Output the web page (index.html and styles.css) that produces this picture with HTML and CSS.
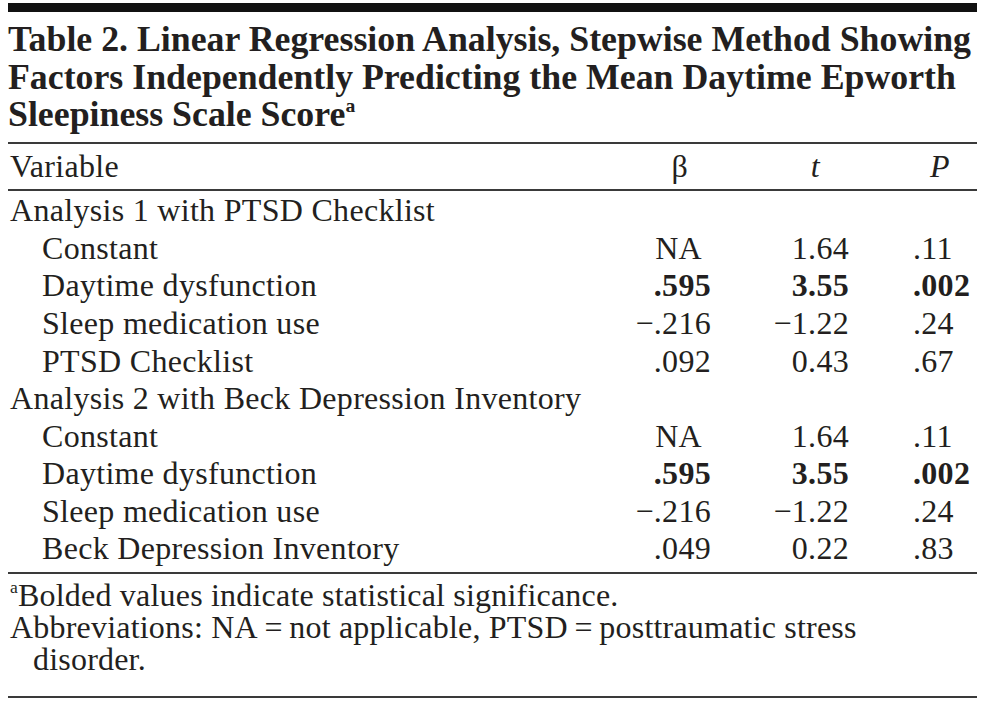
FILE: index.html
```html
<!DOCTYPE html>
<html lang="en">
<head>
<meta charset="utf-8">
<title>Table 2</title>
<link rel="stylesheet" href="styles.css">
</head>
<body>
<div class="page">
  <div class="topbar"></div>
  <h1 class="title">Table 2. Linear Regression Analysis, Stepwise Method Showing<br>Factors Independently Predicting the Mean Daytime Epworth<br>Sleepiness Scale Score<sup class="sup">a</sup></h1>
  <div class="table">
    <div class="row head">
      <span class="label">Variable</span>
      <span class="c2 hb">β</span>
      <span class="c3 ht"><i>t</i></span>
      <span class="c4 hp"><i>P</i></span>
    </div>
    <div class="tbody">
      <div class="row"><span class="label">Analysis 1 with PTSD Checklist</span><span class="c2"></span><span class="c3"></span><span class="c4"></span></div>
      <div class="row"><span class="label sub">Constant</span><span class="c2 na">NA</span><span class="c3">1.64</span><span class="c4">.11</span></div>
      <div class="row"><span class="label sub">Daytime dysfunction</span><span class="c2 b">.595</span><span class="c3 b">3.55</span><span class="c4 b">.002</span></div>
      <div class="row"><span class="label sub">Sleep medication use</span><span class="c2">−.216</span><span class="c3">−1.22</span><span class="c4">.24</span></div>
      <div class="row"><span class="label sub">PTSD Checklist</span><span class="c2">.092</span><span class="c3">0.43</span><span class="c4">.67</span></div>
      <div class="row"><span class="label">Analysis 2 with Beck Depression Inventory</span><span class="c2"></span><span class="c3"></span><span class="c4"></span></div>
      <div class="row"><span class="label sub">Constant</span><span class="c2 na">NA</span><span class="c3">1.64</span><span class="c4">.11</span></div>
      <div class="row"><span class="label sub">Daytime dysfunction</span><span class="c2 b">.595</span><span class="c3 b">3.55</span><span class="c4 b">.002</span></div>
      <div class="row"><span class="label sub">Sleep medication use</span><span class="c2">−.216</span><span class="c3">−1.22</span><span class="c4">.24</span></div>
      <div class="row"><span class="label sub">Beck Depression Inventory</span><span class="c2">.049</span><span class="c3">0.22</span><span class="c4">.83</span></div>
    </div>
  </div>
  <div class="notes">
    <p class="note"><sup class="fsup">a</sup>Bolded values indicate statistical significance.</p>
    <p class="note">Abbreviations: NA&thinsp;=&thinsp;not applicable, PTSD&thinsp;=&thinsp;posttraumatic stress disorder.</p>
  </div>
</div>
</body>
</html>
```

FILE: styles.css
```css
html, body {
  margin: 0;
  padding: 0;
  background: #ffffff;
}

body {
  font-family: "Liberation Serif", "Times New Roman", serif;
  color: #231f20;
}

.page {
  padding: 3px 10px 0 8px;
}

.topbar {
  height: 9px;
  background: #111111;
}

.title {
  margin: 0;
  padding: 9px 0 8px 0;
  font-size: 35.8px;
  font-weight: bold;
  line-height: 37.7px;
  white-space: nowrap;
  border-bottom: 2px solid #3a3a3a;
}

.sup {
  font-size: 0.55em;
  line-height: 0;
  vertical-align: 0.72em;
  font-weight: bold;
}

.table {
  font-size: 32px;
  letter-spacing: 0.3px;
}

.row {
  display: grid;
  grid-template-columns: 1fr 100px 138px 128px;
  line-height: 37.56px;
  white-space: nowrap;
}

.head {
  line-height: 37.7px;
  padding: 4px 0 3.3px 0;
  border-bottom: 2px solid #3a3a3a;
}

.tbody {
  padding: 1.2px 0 3.8px 0;
  border-bottom: 2px solid #3a3a3a;
}

.label {
  padding-left: 2px;
}

.label.sub {
  padding-left: 34px;
}

.c2, .c3 {
  text-align: right;
}

.c4 {
  text-align: left;
  padding-left: 64px;
}

.na {
  padding-right: 9px;
}

.hb {
  padding-right: 23px;
}

.ht {
  padding-right: 29px;
}

.hp {
  padding-left: 81px;
}

.b {
  font-weight: bold;
}

.notes {
  padding: 5.3px 0 21px 0;
  border-bottom: 2px solid #3a3a3a;
}

.note {
  margin: 0;
  font-size: 32px;
  letter-spacing: 0.2px;
  line-height: 32px;
  padding-left: 25px;
  text-indent: -23px;
}

.fsup {
  font-size: 0.55em;
  line-height: 0;
  vertical-align: 0.72em;
}
```
